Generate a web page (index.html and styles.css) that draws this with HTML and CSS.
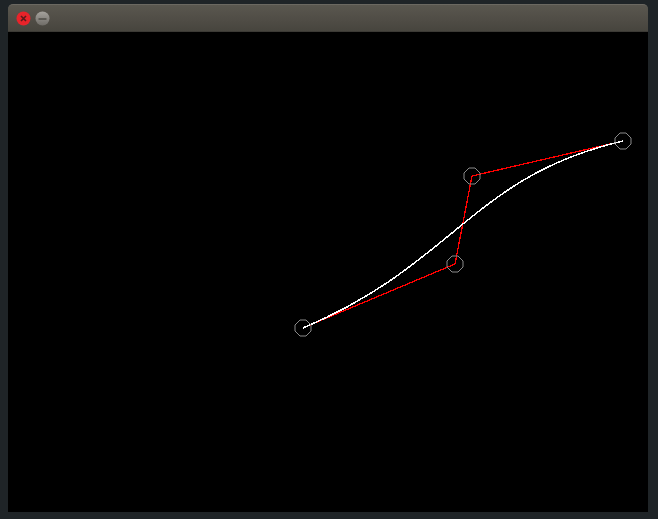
FILE: index.html
```html
<!DOCTYPE html>
<html>
<head>
<meta charset="utf-8">
<link rel="stylesheet" href="styles.css">
</head>
<body>
<div class="window">
  <div class="titlebar">
    <span class="btn close">
      <svg width="15" height="15" viewBox="0 0 15 15"><circle cx="7.5" cy="7.5" r="7" fill="#e8232a"/><path d="M5 5 L10 10 M10 5 L5 10" stroke="#5a1a1a" stroke-width="1.6"/></svg>
    </span>
    <span class="btn min">
      <svg width="15" height="15" viewBox="0 0 15 15"><defs><linearGradient id="g" x1="0" y1="0" x2="0" y2="1"><stop offset="0" stop-color="#a5a29d"/><stop offset="1" stop-color="#6f6c67"/></linearGradient></defs><circle cx="7.5" cy="7.5" r="7" fill="url(#g)"/><path d="M3.5 8 H11.5" stroke="#4a4843" stroke-width="1.4"/></svg>
    </span>
  </div>
  <div class="canvas">
    <svg width="640" height="480" viewBox="0 0 640 480">
      <g fill="none" stroke="#f00" stroke-width="1.3" shape-rendering="crispEdges">
        <line x1="295" y1="296" x2="447" y2="232"/>
        <line x1="447" y1="232" x2="464" y2="144"/>
        <line x1="464" y1="144" x2="615" y2="109"/>
      </g>
      <path d="M295 296 C447 232 464 144 615 109" fill="none" stroke="#fff" stroke-width="1.5" shape-rendering="crispEdges"/>
      <g fill="none" stroke="#8a8a8a" stroke-width="1">
        <polygon points="292,288 298,288 303,293 303,299 298,304 292,304 287,299 287,293"/>
        <polygon points="444,224 450,224 455,229 455,235 450,240 444,240 439,235 439,229"/>
        <polygon points="461,136 467,136 472,141 472,147 467,152 461,152 456,147 456,141"/>
        <polygon points="612,101 618,101 623,106 623,112 618,117 612,117 607,112 607,106"/>
      </g>
    </svg>
  </div>
</div>
</body>
</html>
```
FILE: styles.css
```css
html, body {
  margin: 0;
  padding: 0;
}
body {
  background: #1f2427;
  width: 658px;
  height: 519px;
  overflow: hidden;
}
.window {
  margin: 4px 0 0 8px;
  width: 640px;
}
.titlebar {
  height: 28px;
  box-sizing: border-box;
  border-radius: 5px 5px 0 0;
  background: linear-gradient(#5a574f, #4f4c45 60%, #47453e);
  border-top: 1px solid #6b6861;
  border-bottom: 1px solid #3c3a35;
  display: flex;
  align-items: center;
  gap: 4px;
  padding-left: 8px;
}
.btn {
  display: flex;
  width: 15px;
  height: 15px;
}
.canvas {
  width: 640px;
  height: 480px;
  background: #000;
}
.canvas svg {
  display: block;
}
```
